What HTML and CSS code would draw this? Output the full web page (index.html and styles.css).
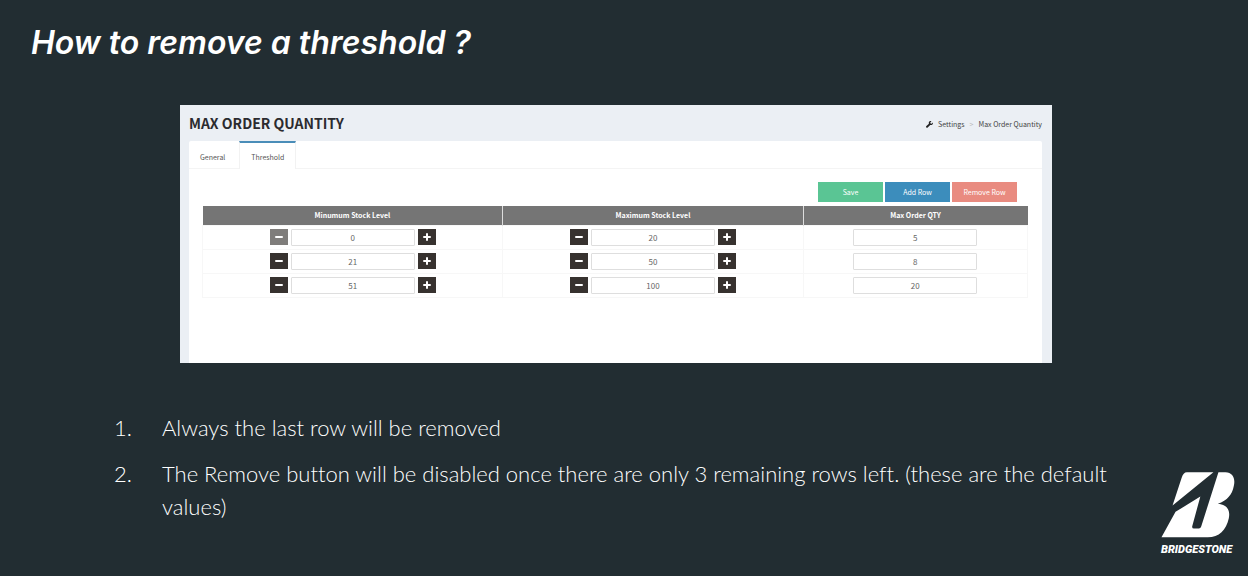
FILE: index.html
```html
<!DOCTYPE html>
<html lang="en">
<head>
<meta charset="utf-8">
<title>How to remove a threshold ?</title>
<link rel="stylesheet" href="styles.css">
</head>
<body>
<main class="slide">
  <h1 class="slide-title">How to remove a threshold ?</h1>

  <section class="panel">
    <header class="panel-head">
      <h2 class="panel-title">MAX ORDER QUANTITY</h2>
      <nav class="crumbs" aria-label="Breadcrumb">
        <svg class="wrench" viewBox="0 0 16 16" aria-hidden="true"><path d="M15.6 3.6 12.8 6.300 10.400 5.600 9.700 3.200 12.400.4C10-.4 7.400.6 6.600 3c-.4 1.100-.3 2.200.1 3.100L.9 11.700c-1 1-1 2.300-.2 3.100s2.200.8 3.200-.2l5.700-5.600c1 .4 2.100.5 3.200 0 2.400-.8 3.600-3.200 2.800-5.400Z"/></svg>
        <a href="#settings">Settings</a>
        <span class="sep">&gt;</span>
        <a href="#quantity">Max Order Quantity</a>
      </nav>
    </header>

    <div class="box">
      <nav class="tabs">
        <a class="tab" href="#general">General</a>
        <a class="tab tab-active" href="#threshold">Threshold</a>
      </nav>
      <div class="pane">
        <div class="actions">
          <button class="btn btn-save" type="button">Save</button>
          <button class="btn btn-add" type="button">Add Row</button>
          <button class="btn btn-remove" type="button">Remove Row</button>
        </div>
        <table class="levels">
          <thead>
            <tr><th class="col-level">Minumum Stock Level</th><th class="col-level">Maximum Stock Level</th><th>Max Order QTY</th></tr>
          </thead>
          <tbody>
            <tr>
              <td><div class="stepper"><button class="step minus" type="button" aria-label="Decrease" disabled></button><input class="field" type="text" aria-label="Minimum stock level, row 1" value="0"><button class="step plus" type="button" aria-label="Increase"></button></div></td>
              <td><div class="stepper"><button class="step minus" type="button" aria-label="Decrease"></button><input class="field" type="text" aria-label="Maximum stock level, row 1" value="20"><button class="step plus" type="button" aria-label="Increase"></button></div></td>
              <td><div class="stepper"><input class="field" type="text" aria-label="Max order quantity, row 1" value="5"></div></td>
            </tr>
            <tr>
              <td><div class="stepper"><button class="step minus" type="button" aria-label="Decrease"></button><input class="field" type="text" aria-label="Minimum stock level, row 2" value="21"><button class="step plus" type="button" aria-label="Increase"></button></div></td>
              <td><div class="stepper"><button class="step minus" type="button" aria-label="Decrease"></button><input class="field" type="text" aria-label="Maximum stock level, row 2" value="50"><button class="step plus" type="button" aria-label="Increase"></button></div></td>
              <td><div class="stepper"><input class="field" type="text" aria-label="Max order quantity, row 2" value="8"></div></td>
            </tr>
            <tr>
              <td><div class="stepper"><button class="step minus" type="button" aria-label="Decrease"></button><input class="field" type="text" aria-label="Minimum stock level, row 3" value="51"><button class="step plus" type="button" aria-label="Increase"></button></div></td>
              <td><div class="stepper"><button class="step minus" type="button" aria-label="Decrease"></button><input class="field" type="text" aria-label="Maximum stock level, row 3" value="100"><button class="step plus" type="button" aria-label="Increase"></button></div></td>
              <td><div class="stepper"><input class="field" type="text" aria-label="Max order quantity, row 3" value="20"></div></td>
            </tr>
          </tbody>
        </table>
      </div>
    </div>
  </section>

  <footer class="notes">
    <ol class="steps">
      <li class="note"><span class="num">1.</span><span>Always the last row will be removed</span></li>
      <li class="note"><span class="num">2.</span><span>The Remove button will be disabled once there are only 3 remaining rows left. (these are the default values)</span></li>
    </ol>
    <div class="brand">
      <svg class="brand-mark" viewBox="42 26 220 197" aria-hidden="true">
        <path d="M101 27H198L76 126 103 44Q108 27 119 27Z"/>
        <path d="M213 27H234C256 28 264 45 259 67C254 94 240 110 211 121C238 123 249 139 244 164C236 200 215 221 181 221H43L85 145 159 99 135 187Q133 195 140 195H151Q160 195 162 187Z"/>
      </svg>
      <span class="brand-name">BRIDGESTONE</span>
    </div>
  </footer>
</main>
</body>
</html>
```
FILE: styles.css
```css
* { box-sizing: border-box; }

body {
  margin: 0;
  background: #222d32;
  color: #fff;
}

.slide {
  display: flex;
  flex-direction: column;
  min-height: 100vh;
  padding-top: 20px;
}

.slide-title {
  margin: 0 0 40px;
  padding-left: 31px;
  font: italic 600 32px/45px "Century Gothic", Inter, sans-serif;
}

.panel {
  display: flex;
  flex-direction: column;
  min-height: 258px;
  margin: 0 196px 0 180px;
  padding: 0 10px 0 9px;
  background: #ebeff4;
  color: #555;
  font: 7px/12px "Source Sans Pro", "Noto Sans CJK SC", sans-serif;
}

.panel-head {
  display: flex;
  justify-content: space-between;
  align-items: center;
  height: 36px;
}

.panel-title {
  margin: 0;
  color: #2b2b2f;
  font-size: 14px;
  line-height: 20px;
  font-weight: 700;
}

.crumbs {
  display: flex;
  align-items: center;
  gap: 5px;
  padding-top: 2px;
}

.crumbs a { color: #444; text-decoration: none; }
.crumbs .sep { color: #bbb; }
.wrench { width: 7px; height: 7px; fill: #222; }

.box {
  flex: 1;
  background: #fff;
  border-radius: 2px 2px 0 0;
}

.tabs {
  display: flex;
  height: 28px;
  border-bottom: 1px solid #f4f4f4;
}

.tab {
  padding: 8px 11px 0;
  border-top: 2px solid transparent;
  border-right: 1px solid transparent;
  color: #555;
  text-decoration: none;
}

.tab:first-child { padding-right: 13px; }

.tab-active {
  height: 28px;
  border-top-color: #4a8db8;
  border-right-color: #f2f2f2;
  border-left: 1px solid #f2f2f2;
  background: #fff;
}

.pane { padding: 13px 14px 0 13px; }

.actions {
  display: flex;
  justify-content: flex-end;
  gap: 2px;
  margin-bottom: 4px;
  padding-right: 11px;
}

.btn {
  width: 65px;
  height: 20px;
  padding: 0;
  border: 0;
  color: #fff;
  font: inherit;
}

.btn-save { background: #5ac594; }
.btn-add { background: #3c8dbc; }
.btn-remove { background: #e98b80; }

.levels {
  width: 100%;
  border-collapse: collapse;
  table-layout: fixed;
}

.levels th {
  height: 19px;
  padding: 0;
  background: #757575;
  color: #fff;
  font-weight: 700;
}

.levels th + th { border-left: 1px solid #ddd; }
.levels .col-level { width: 36.4%; }

.levels td {
  height: 24px;
  padding: 0;
  border: 1px solid #f7f7f7;
}

.stepper {
  display: flex;
  justify-content: center;
  align-items: center;
  gap: 3px;
}

.step {
  position: relative;
  width: 18px;
  height: 16px;
  padding: 0;
  border: 0;
  background: #37322f;
}

.step:disabled { background: #7f7d7b; }

.step::before,
.plus::after {
  content: "";
  position: absolute;
  inset: 7px 5px;
  border-radius: 1px;
  background: #fff;
}

.plus::after { inset: 4px 8px; }

.field {
  width: 124px;
  height: 17px;
  padding: 0;
  border: 1px solid #dedede;
  border-radius: 1px;
  background: #fff;
  color: #666;
  font: inherit;
  font-size: 8px;
  text-align: center;
}

.notes {
  display: flex;
  flex: 1;
  justify-content: space-between;
  padding: 48px 12px 20px 114px;
}

.steps {
  flex: 1;
  margin: 0;
  padding: 0;
  list-style: none;
  font: 300 22px/33px "Calibri Light", Lato, sans-serif;
  font-variant-ligatures: none;
}

.note { display: flex; margin-bottom: 13px; }
.num { flex: 0 0 48px; }

.brand {
  display: flex;
  flex-direction: column;
  align-self: flex-end;
  gap: 6px;
  width: 75px;
  margin-left: 24px;
}

.brand-mark { width: 74px; height: 66px; fill: #fff; }

.brand-name {
  font: italic 900 11px/12px Roboto, "Liberation Sans", sans-serif;
}
```
